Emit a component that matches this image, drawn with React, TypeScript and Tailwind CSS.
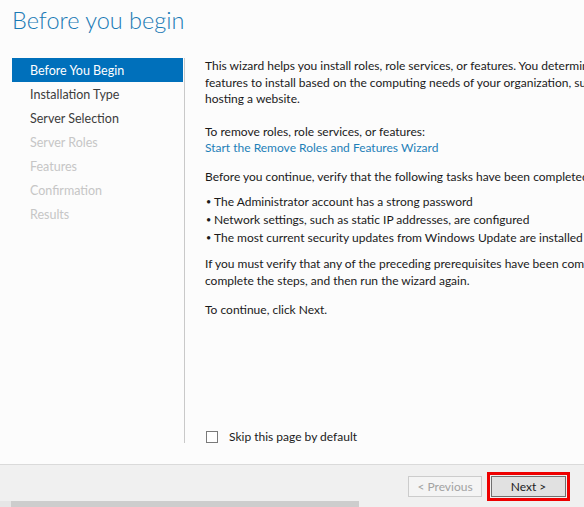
const navItems = [
  { label: "Before You Begin", state: "active" },
  { label: "Installation Type", state: "enabled" },
  { label: "Server Selection", state: "enabled" },
  { label: "Server Roles", state: "disabled" },
  { label: "Features", state: "disabled" },
  { label: "Confirmation", state: "disabled" },
  { label: "Results", state: "disabled" },
];

const bullets = [
  "The Administrator account has a strong password",
  "Network settings, such as static IP addresses, are configured",
  "The most current security updates from Windows Update are installed",
];

export default function App() {
  return (
    <div className="flex h-[507px] w-[584px] flex-col overflow-hidden bg-[#fcfcfc] font-['Lato',sans-serif] text-[12px] text-[#1a1a1a]">
      {/* ── Title ── */}
      <h1 className="h-[58px] pl-[12px] pt-[4px] text-[23.5px] font-light leading-[32px] text-[#1a7ab5]">
        Before you begin
      </h1>

      {/* ── Nav + content ── */}
      <div className="flex h-[385px]">
        <nav className="ml-[12px] w-[173px] shrink-0 border-r border-[#c9c9c9] text-[12.5px]">
          {navItems.map((item) => (
            <div
              key={item.label}
              className={
                item.state === "active"
                  ? "mr-[1px] h-[24px] bg-[#0070bb] pl-[18px] leading-[25px] text-white"
                  : item.state === "enabled"
                    ? "h-[24px] pl-[18px] leading-[25px] text-[#3c3c3c]"
                    : "h-[24px] pl-[18px] leading-[25px] text-[#c6c6c6]"
              }
            >
              {item.label}
            </div>
          ))}
        </nav>

        <div className="flex min-w-0 flex-1 flex-col justify-between pl-[20px]">
          <div className="whitespace-nowrap leading-[16.5px]">
            <p>
              This wizard helps you install roles, role services, or features. You determine which roles, role services, or
              <br />
              features to install based on the computing needs of your organization, such as sharing documents, or
              <br />
              hosting a website.
            </p>

            <p className="mt-[16px]">To remove roles, role services, or features:</p>
            <a className="block text-[#1e80b8]">Start the Remove Roles and Features Wizard</a>

            <p className="mt-[12px]">Before you continue, verify that the following tasks have been completed:</p>

            <ul className="mt-[8px]">
              {bullets.map((b) => (
                <li key={b} className="flex h-[18px] items-center">
                  <span className="w-[9px] pl-[1px] text-[9px]">•</span>
                  {b}
                </li>
              ))}
            </ul>

            <p className="mt-[9px]">
              If you must verify that any of the preceding prerequisites have been completed, close the wizard,
              <br />
              complete the steps, and then run the wizard again.
            </p>

            <p className="mt-[13px]">To continue, click Next.</p>
          </div>

          <label className="flex h-[12px] items-center gap-[11px] pl-[1px] leading-[12px]">
            <span className="h-[12px] w-[12px] border border-[#7a7a7a] bg-white" />
            Skip this page by default
          </label>
        </div>
      </div>

      {/* ── Footer ── */}
      <div className="mt-[21px] flex h-[37px] items-start justify-end gap-[9px] border-t border-[#dadada] bg-[#f0f0f0] pr-[18px] pt-[11px]">
        <button className="h-[21px] w-[74px] border border-[#cccccc] bg-[#f4f4f4] text-[#a2a2a2]">
          &lt; Previous
        </button>
        <button className="h-[21px] w-[75px] border border-[#707070] bg-[#e1e1e1] text-[#1e1e1e] outline-[3px] outline-offset-[1px] outline-[#ee0000] outline-solid">
          Next &gt;
        </button>
      </div>

      {/* ── Scrollbar strip ── */}
      <div className="flex h-[6px] bg-[#f0f0f0]">
        <div className="w-[11px] bg-[#e6e6e6]" />
        <div className="w-[348px] bg-[#cdcdcd]" />
      </div>
    </div>
  );
}
